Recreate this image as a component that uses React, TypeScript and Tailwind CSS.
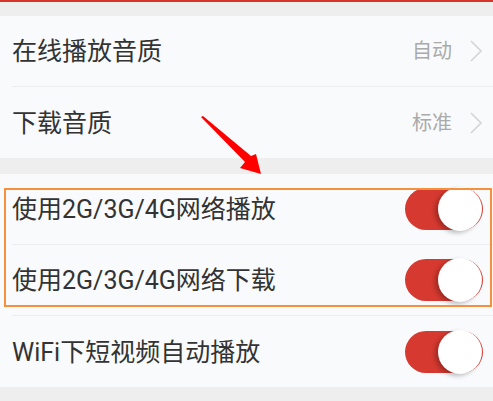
import React from "react";

const font = { fontFamily: "Roboto, 'Noto Sans CJK SC', sans-serif" };

const Chevron = () => (
  <svg width="14" height="24" viewBox="0 0 14 24" className="ml-[17px]">
    <path d="M2 2 L12 12 L2 22" fill="none" stroke="#d4d4d4" strokeWidth="1.6" />
  </svg>
);

const Toggle = () => (
  <div className="relative w-[78px] h-[42px] mr-[10px]">
    <div className="absolute inset-0 rounded-full bg-[#d5392f]" />
    <div className="absolute right-[1px] top-[-1px] w-[44px] h-[44px] rounded-full bg-white shadow-[-3px_2px_4px_rgba(0,0,0,0.25)]" />
  </div>
);

const Row = ({ label, value, toggle, divider }: { label: string; value?: string; toggle?: boolean; divider?: boolean }) => (
  <div className="pl-[12px]">
    <div className={`h-[71px] flex items-center justify-between ${divider ? "border-b border-[#eceef1]" : ""}`}>
      <span className="text-[25px] text-[#333] pt-[2px]">{label}</span>
      {toggle ? (
        <Toggle />
      ) : (
        <div className="flex items-center mr-[10px]">
          <span className="text-[20px] text-[#aaaaaa]">{value}</span>
          <Chevron />
        </div>
      )}
    </div>
  </div>
);

export default function App() {
  return (
    <div className="relative w-[493px] h-[401px] overflow-hidden bg-[#eeeeee]" style={font}>
      <div className="h-[2px] bg-[#d9342b]" />
      <div className="h-[14px]" />
      <div className="bg-[#f9fafc]">
        <Row label="在线播放音质" value="自动" divider />
        <Row label="下载音质" value="标准" />
      </div>
      <div className="h-[16px]" />
      <div className="bg-[#f9fafc]">
        <Row label="使用2G/3G/4G网络播放" toggle divider />
        <Row label="使用2G/3G/4G网络下载" toggle divider />
        <Row label="WiFi下短视频自动播放" toggle />
      </div>

      {/* annotation */}
      <div className="absolute left-[4px] top-[188px] w-[488px] h-[119px] border-[2.5px] border-[#f5913e]" />
      <svg className="absolute left-0 top-0" width="493" height="401">
        <polygon points="201,117 203,116 251,156 256,154 261,174 240,168 245,162" fill="#ff0000" />
      </svg>
    </div>
  );
}
